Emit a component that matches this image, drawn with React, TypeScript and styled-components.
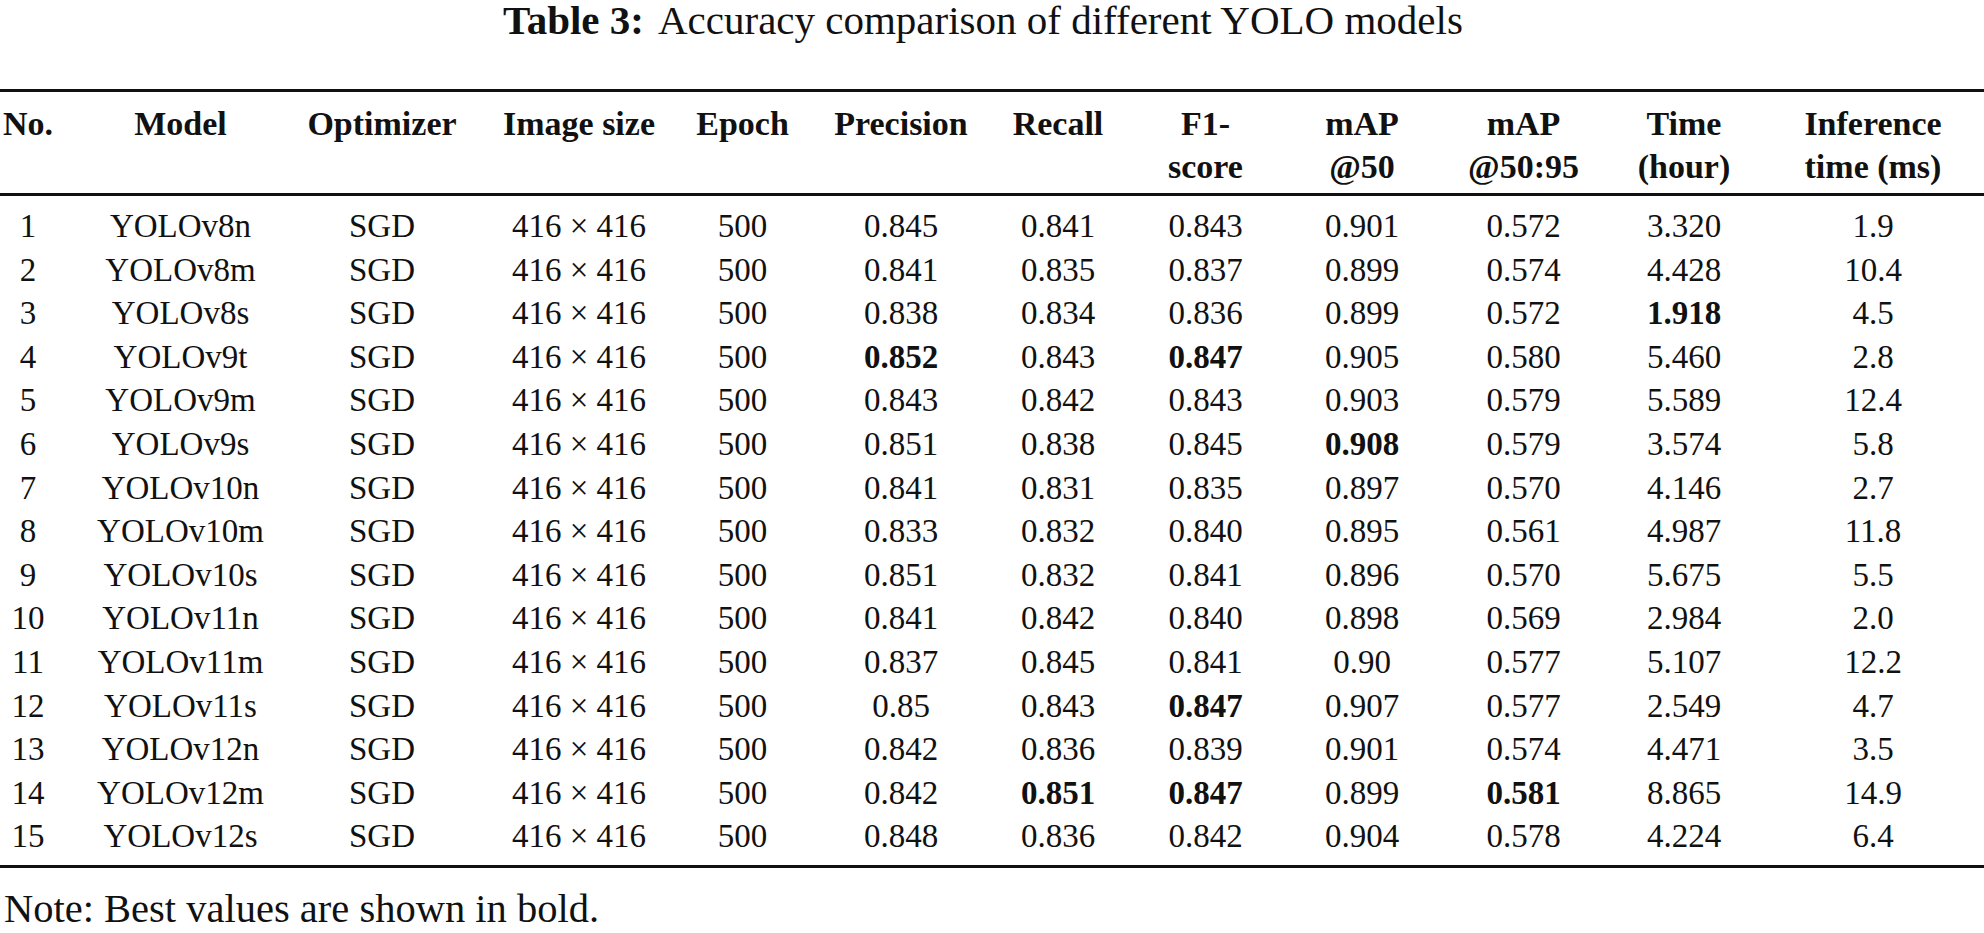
import React from 'react';
import styled, { createGlobalStyle } from 'styled-components';

const GlobalStyle = createGlobalStyle`
  html, body {
    margin: 0;
    padding: 0;
    background: #ffffff;
  }
  body {
    font-family: 'Liberation Serif', 'Times New Roman', serif;
    color: #111111;
  }
`;

type Col = { width: number; shift: number };

// widths follow the midpoints between column centres, shift moves the text centre
const cols: Col[] = [
  { width: 104, shift: -24 },
  { width: 177, shift: -12 },
  { width: 200, shift: 1 },
  { width: 180, shift: 8 },
  { width: 161, shift: 1 },
  { width: 158, shift: 0 },
  { width: 152, shift: 2 },
  { width: 151, shift: -2 },
  { width: 160, shift: -1 },
  { width: 161, shift: 0 },
  { width: 174, shift: -7 },
  { width: 206, shift: -8 },
];

const headers: React.ReactNode[] = [
  'No.',
  'Model',
  'Optimizer',
  'Image size',
  'Epoch',
  'Precision',
  'Recall',
  <>F1-<br />score</>,
  <>mAP<br />@50</>,
  <>mAP<br />@50:95</>,
  <>Time<br />(hour)</>,
  <>Inference<br />time (ms)</>,
];

// "*" marks a bold (best) value
const rows: string[][] = [
  ['1', 'YOLOv8n', '0.845', '0.841', '0.843', '0.901', '0.572', '3.320', '1.9'],
  ['2', 'YOLOv8m', '0.841', '0.835', '0.837', '0.899', '0.574', '4.428', '10.4'],
  ['3', 'YOLOv8s', '0.838', '0.834', '0.836', '0.899', '0.572', '*1.918', '4.5'],
  ['4', 'YOLOv9t', '*0.852', '0.843', '*0.847', '0.905', '0.580', '5.460', '2.8'],
  ['5', 'YOLOv9m', '0.843', '0.842', '0.843', '0.903', '0.579', '5.589', '12.4'],
  ['6', 'YOLOv9s', '0.851', '0.838', '0.845', '*0.908', '0.579', '3.574', '5.8'],
  ['7', 'YOLOv10n', '0.841', '0.831', '0.835', '0.897', '0.570', '4.146', '2.7'],
  ['8', 'YOLOv10m', '0.833', '0.832', '0.840', '0.895', '0.561', '4.987', '11.8'],
  ['9', 'YOLOv10s', '0.851', '0.832', '0.841', '0.896', '0.570', '5.675', '5.5'],
  ['10', 'YOLOv11n', '0.841', '0.842', '0.840', '0.898', '0.569', '2.984', '2.0'],
  ['11', 'YOLOv11m', '0.837', '0.845', '0.841', '0.90', '0.577', '5.107', '12.2'],
  ['12', 'YOLOv11s', '0.85', '0.843', '*0.847', '0.907', '0.577', '2.549', '4.7'],
  ['13', 'YOLOv12n', '0.842', '0.836', '0.839', '0.901', '0.574', '4.471', '3.5'],
  ['14', 'YOLOv12m', '0.842', '*0.851', '*0.847', '0.899', '*0.581', '8.865', '14.9'],
  ['15', 'YOLOv12s', '0.848', '0.836', '0.842', '0.904', '0.578', '4.224', '6.4'],
];

const template = cols.map((c) => `${c.width}px`).join(' ');

const App = () => {
  return (
    <Page>
      <GlobalStyle />
      <Caption>
        <CaptionLabel>Table 3:</CaptionLabel> Accuracy comparison of different YOLO models
      </Caption>
      <Table>
        <HeadRow>
          {headers.map((h, i) => (
            <HeadCell key={i} $shift={cols[i].shift}>
              <span>{h}</span>
            </HeadCell>
          ))}
        </HeadRow>
        <Body>
          {rows.map((r) => {
            const cells = [r[0], r[1], 'SGD', '416 × 416', '500', ...r.slice(2)];
            return (
              <Row key={r[0]}>
                {cells.map((v, i) => {
                  const bold = v.startsWith('*');
                  return (
                    <Cell key={i} $shift={cols[i].shift} $bold={bold}>
                      <span>{bold ? v.slice(1) : v}</span>
                    </Cell>
                  );
                })}
              </Row>
            );
          })}
        </Body>
      </Table>
      <Note>Note: Best values are shown in bold.</Note>
    </Page>
  );
};

const Page = styled.div`
  width: 1984px;
`;
const Caption = styled.h2`
  margin: 0 0 49px;
  padding-right: 18px;
  font-size: 41px;
  line-height: 40px;
  font-weight: 400;
  text-align: center;
  white-space: pre;
`;
const CaptionLabel = styled.b`
  font-weight: 700;
  margin-right: 6px;
`;
const Table = styled.div`
  display: flex;
  flex-direction: column;
`;
const HeadRow = styled.div`
  display: grid;
  grid-template-columns: ${template};
  border-top: 3px solid #111;
  border-bottom: 3px solid #111;
  padding: 10px 0 5px;
`;
const Body = styled.div`
  padding: 9px 0 6px;
  border-bottom: 3px solid #111;
`;
const Row = styled.div`
  display: grid;
  grid-template-columns: ${template};
`;
const BaseCell = styled.div<{ $shift: number }>`
  display: flex;
  justify-content: center;
  align-items: flex-start;
  text-align: center;
  white-space: nowrap;
  padding-left: ${(p) => Math.max(0, p.$shift * 2)}px;
  padding-right: ${(p) => Math.max(0, -p.$shift * 2)}px;
`;
const HeadCell = styled(BaseCell)`
  font-size: 34px;
  line-height: 43px;
  font-weight: 700;
`;
const Cell = styled(BaseCell)<{ $bold: boolean }>`
  font-size: 33px;
  line-height: 43.6px;
  font-weight: ${(p) => (p.$bold ? 700 : 400)};
`;
const Note = styled.p`
  margin: 18px 0 0 4px;
  font-size: 40.5px;
  line-height: 45px;
`;

export default App;
